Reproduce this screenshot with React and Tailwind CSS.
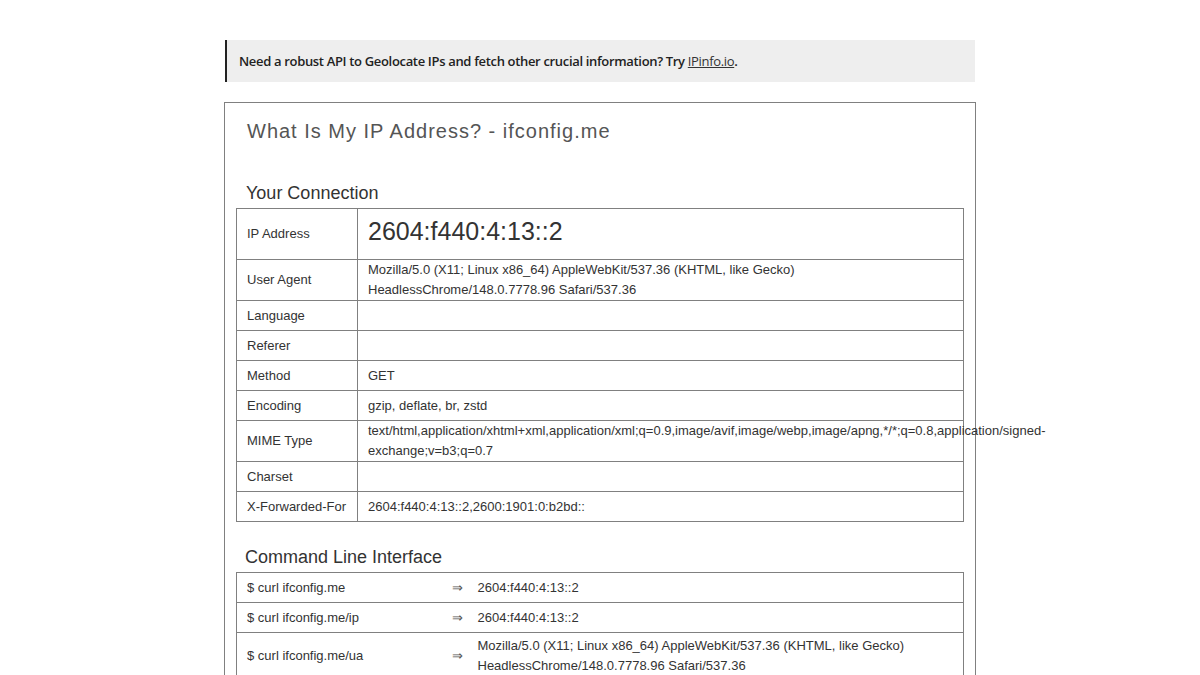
import React from 'react';

const ua =
  'Mozilla/5.0 (X11; Linux x86_64) AppleWebKit/537.36 (KHTML, like Gecko) HeadlessChrome/148.0.7778.96 Safari/537.36';
const ip = '2604:f440:4:13::2';

const connection = [
  ['User Agent', ua],
  ['Language', ''],
  ['Referer', ''],
  ['Method', 'GET'],
  ['Encoding', 'gzip, deflate, br, zstd'],
  [
    'MIME Type',
    'text/html,application/xhtml+xml,application/xml;q=0.9,image/avif,image/webp,image/apng,*/*;q=0.8,application/signed-exchange;v=b3;q=0.7',
  ],
  ['Charset', ''],
  ['X-Forwarded-For', '2604:f440:4:13::2,2600:1901:0:b2bd::'],
];

const commands = [
  ['$ curl ifconfig.me', ip],
  ['$ curl ifconfig.me/ip', ip],
  ['$ curl ifconfig.me/ua', ua],
];

const cell = 'border border-[#808080] px-[10px] py-0 h-[30px] align-middle leading-[20px]';

export default function App() {
  return (
    <div className="min-h-screen bg-white text-[#333] font-['Liberation_Sans',Arial,sans-serif]">
      <div className="w-[752px] mx-auto pt-[40px]">
        <div className="mx-px h-[42px] flex items-center bg-[#eeeeee] border-l-2 border-[#222] pl-[12px] pt-px font-['Open_Sans',sans-serif] font-semibold text-[13px] tracking-[-0.33px] text-[#222]">
          <span>
            Need a robust API to Geolocate IPs and fetch other crucial information? Try{' '}
            <a href="#" className="underline font-normal text-[#333]">IPinfo.io</a>.
          </span>
        </div>

        <div className="mt-[20px] border border-[#808080] px-[11px] pb-6">
          <h1 className="pl-[11px] pt-[16px] text-[20px] leading-[24px] tracking-[1px] text-[#555] font-normal">
            What Is My IP Address? - ifconfig.me
          </h1>

          <h2 className="mt-[35px] pl-[10px] text-[18px] leading-[30px] text-[#333]">Your Connection</h2>
          <table className="w-full table-fixed border-collapse text-[13px]">
            <colgroup>
              <col className="w-[121px]" />
              <col />
            </colgroup>
            <tbody>
              <tr>
                <td className={cell + ' h-[51px]'}>IP Address</td>
                <td className={cell + ' h-[51px] text-[25px] leading-[28px] pb-[7px]'}>{ip}</td>
              </tr>
              {connection.map(([k, v]) => (
                <tr key={k}>
                  <td className={cell}>{k}</td>
                  <td className={cell + ' whitespace-normal'}>{v}</td>
                </tr>
              ))}
            </tbody>
          </table>

          <h2 className="mt-[20px] pl-[9px] text-[18px] leading-[30px] text-[#333]">Command Line Interface</h2>
          <table className="w-full table-fixed border-collapse text-[13px]">
            <colgroup>
              <col className="w-[205px]" />
              <col className="w-[26px]" />
              <col />
            </colgroup>
            <tbody>
              {commands.map(([c, v], i) => {
                const pad = i === 2 ? 'py-[3px]' : 'py-0';
                return (
                  <tr key={c}>
                    <td className={`border-y border-l border-[#808080] px-[10px] ${pad} h-[30px] leading-[20px] align-middle`}>{c}</td>
                    <td className={`border-y border-[#808080] pl-[10px] ${pad} h-[30px] leading-[20px] align-middle text-[13px] text-[#555]`}>⇒</td>
                    <td className={`border-y border-r border-[#808080] px-[10px] ${pad} h-[30px] leading-[20px] align-middle`}>{v}</td>
                  </tr>
                );
              })}
            </tbody>
          </table>
        </div>
      </div>
    </div>
  );
}
